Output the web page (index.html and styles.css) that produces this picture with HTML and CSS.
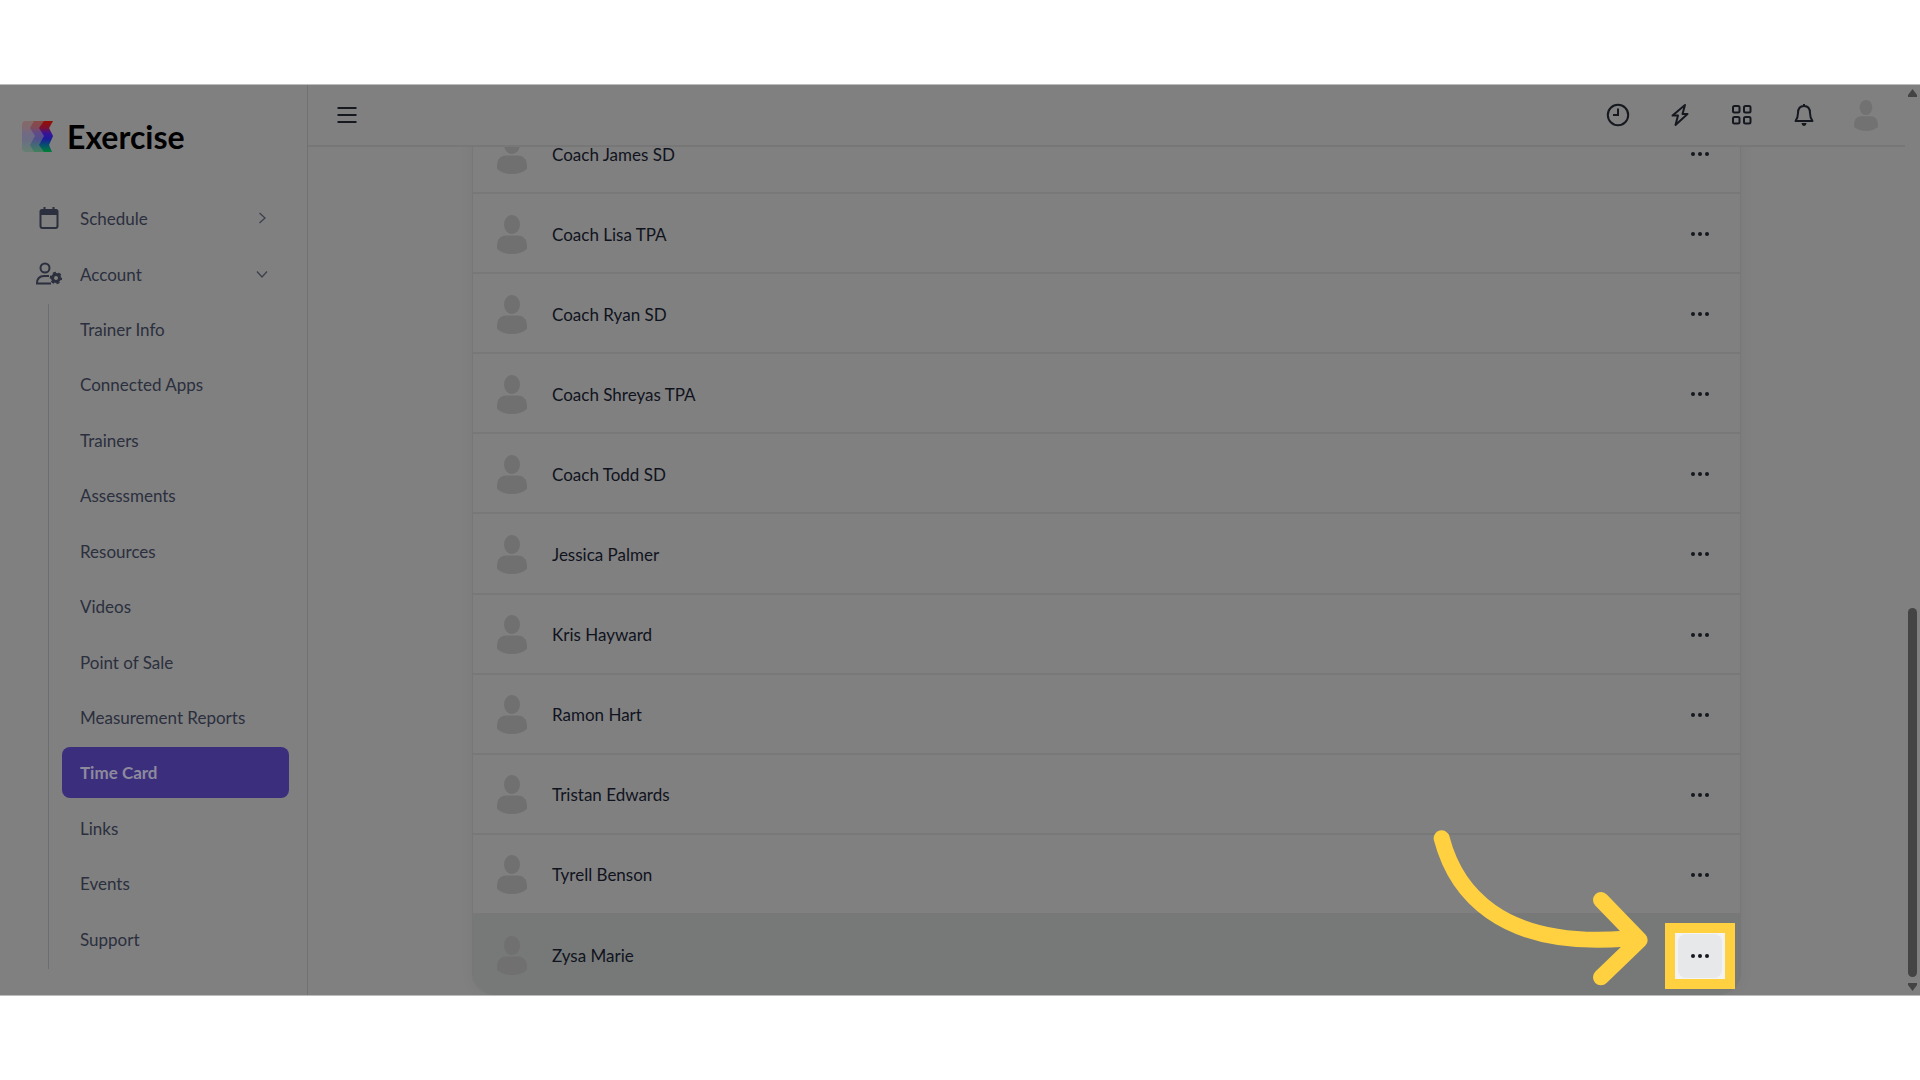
FILE: index.html
```html
<!DOCTYPE html>
<html lang="en">
<head>
    <meta charset="UTF-8">
    <meta name="viewport" content="width=device-width, initial-scale=1.0">
    <link rel="stylesheet" href="styles.css">
    <title>Time Card</title>
</head>
<body>
    <!-- shapes used more than once -->
    <svg class="defs" aria-hidden="true">
        <symbol id="person" viewBox="0 0 30 39">
            <ellipse cx="15" cy="9.500" rx="8" ry="9.500"/>
            <path d="M0 31C0 24 4 20.500 9 20.500H21C26 20.500 30 24 30 31V34C26 37.500 21 39 15 39S4 37.500 0 34Z"/>
        </symbol>
        <symbol id="dots" viewBox="0 0 18 4">
            <circle cx="2" cy="2" r="2"/><circle cx="9" cy="2" r="2"/><circle cx="16" cy="2" r="2"/>
        </symbol>
    </svg>

    <div class="app">
        <aside class="sidebar">
            <a class="brand" href="#">
                <svg width="31" height="31" viewBox="0 0 31 31" aria-hidden="true">
                    <defs>
                        <linearGradient id="rainbow" x1="0" y1="0" x2="0" y2="1">
                            <stop offset="0" stop-color="#951000"/>
                            <stop offset="0.220" stop-color="#7c1030"/>
                            <stop offset="0.400" stop-color="#38139a"/>
                            <stop offset="0.580" stop-color="#1c1b98"/>
                            <stop offset="0.780" stop-color="#06506e"/>
                            <stop offset="1" stop-color="#008035"/>
                        </linearGradient>
                    </defs>
                    <path fill="#808080" d="M4 0H31V31H4Q0 31 0 27V4Q0 0 4 0Z"/>
                    <path fill="url(#rainbow)" opacity="0.200" d="M4 0H31L27 8L31 15L27 24L30 31H4Q0 31 0 27V4Q0 0 4 0Z"/>
                    <path fill="url(#rainbow)" opacity="0.350" d="M12 0H26L22 8L27 15L22 24L27 31H12L8 24L13 15L8 7Z"/>
                    <path fill="url(#rainbow)" d="M22 0H31L27 7L31 15L27 24L30 31H22L17 24L22 15L17 7Z"/>
                </svg>
                <span>Exercise</span>
            </a>

            <nav>
                <button class="group" type="button">
                    <svg class="group-icon" width="26" height="26" viewBox="0 0 26 26" aria-hidden="true">
                        <path fill="none" stroke="currentColor" stroke-width="2" d="M4.500 6.500Q4.500 5 6 5H20Q21.500 5 21.500 6.500V21Q21.500 23 19.500 23H6.500Q4.500 23 4.500 21Z"/>
                        <path fill="currentColor" d="M4 5H22V10H4ZM7.500 2H9.500V6H7.500ZM16.500 2H18.500V6H16.500Z"/>
                    </svg>
                    <span>Schedule</span>
                    <svg class="chevron" width="12" height="12" viewBox="0 0 12 12" aria-hidden="true"><path d="M3.500 1L9 6L3.500 11"/></svg>
                </button>
                <button class="group" type="button">
                    <svg class="group-icon" width="26" height="26" viewBox="0 0 26 26" aria-hidden="true">
                        <circle cx="9" cy="7" r="4.500" fill="none" stroke="currentColor" stroke-width="2"/>
                        <path fill="none" stroke="currentColor" stroke-width="2" d="M13 15H8Q1 15 1 22.500H15"/>
                        <circle cx="20" cy="17" r="3.500" fill="none" stroke="currentColor" stroke-width="3"/>
                        <circle cx="20" cy="17" r="5.200" fill="none" stroke="currentColor" stroke-width="2" stroke-dasharray="3 2.440" stroke-dashoffset="1"/>
                    </svg>
                    <span>Account</span>
                    <svg class="chevron" width="12" height="12" viewBox="0 0 12 12" aria-hidden="true"><path d="M1 3.500L6 9L11 3.500"/></svg>
                </button>
                <ul class="submenu">
                    <li><a href="#">Trainer Info</a></li>
                    <li><a href="#">Connected Apps</a></li>
                    <li><a href="#">Trainers</a></li>
                    <li><a href="#">Assessments</a></li>
                    <li><a href="#">Resources</a></li>
                    <li><a href="#">Videos</a></li>
                    <li><a href="#">Point of Sale</a></li>
                    <li><a href="#">Measurement Reports</a></li>
                    <li><a class="active" href="#">Time Card</a></li>
                    <li><a href="#">Links</a></li>
                    <li><a href="#">Events</a></li>
                    <li><a href="#">Support</a></li>
                </ul>
            </nav>
        </aside>

        <div class="page">
            <header class="topbar">
                <button class="tool" type="button" aria-label="Menu">
                    <svg width="24" height="24" viewBox="0 0 24 24"><path d="M2.500 5H21.500M2.500 12H21.500M2.500 19H21.500"/></svg>
                </button>
                <div class="tools">
                    <button class="tool" type="button" aria-label="Time clock">
                        <svg width="24" height="24" viewBox="0 0 24 24"><circle cx="12" cy="12" r="10.200"/><path d="M12 5.500V12H7"/></svg>
                    </button>
                    <button class="tool" type="button" aria-label="Quick actions">
                        <svg width="24" height="24" viewBox="0 0 24 24"><path stroke-linejoin="round" d="M17 2L4.500 12.500H10L7.500 22L19.500 11H14.500Z"/></svg>
                    </button>
                    <button class="tool" type="button" aria-label="Apps">
                        <svg width="24" height="24" viewBox="0 0 24 24">
                            <rect x="3" y="3" width="6.500" height="6.500" rx="1.500"/><rect x="14" y="3" width="6.500" height="6.500" rx="1.500"/>
                            <rect x="3" y="14" width="6.500" height="6.500" rx="1.500"/><rect x="14" y="14" width="6.500" height="6.500" rx="1.500"/>
                        </svg>
                    </button>
                    <button class="tool" type="button" aria-label="Notifications">
                        <svg width="24" height="24" viewBox="0 0 24 24">
                            <path stroke-linejoin="round" d="M12 3C8 3 6 6 6 10C6 14 5 16 3.500 18H20.500C19 16 18 14 18 10C18 6 16 3 12 3ZM12 1V3"/>
                            <path fill="currentColor" stroke="none" d="M9.500 20H14.500Q14 23 12 23T9.500 20Z"/>
                        </svg>
                    </button>
                    <button class="tool" type="button" aria-label="Profile">
                        <svg class="avatar small" aria-hidden="true"><use href="#person"/></svg>
                    </button>
                </div>
            </header>

            <main>
                <ul class="trainers">
                    <li><svg class="avatar"><use href="#person"/></svg><span>Coach James SD</span><button class="more" type="button" aria-label="More"><svg><use href="#dots"/></svg></button></li>
                    <li><svg class="avatar"><use href="#person"/></svg><span>Coach Lisa TPA</span><button class="more" type="button" aria-label="More"><svg><use href="#dots"/></svg></button></li>
                    <li><svg class="avatar"><use href="#person"/></svg><span>Coach Ryan SD</span><button class="more" type="button" aria-label="More"><svg><use href="#dots"/></svg></button></li>
                    <li><svg class="avatar"><use href="#person"/></svg><span>Coach Shreyas TPA</span><button class="more" type="button" aria-label="More"><svg><use href="#dots"/></svg></button></li>
                    <li><svg class="avatar"><use href="#person"/></svg><span>Coach Todd SD</span><button class="more" type="button" aria-label="More"><svg><use href="#dots"/></svg></button></li>
                    <li><svg class="avatar"><use href="#person"/></svg><span>Jessica Palmer</span><button class="more" type="button" aria-label="More"><svg><use href="#dots"/></svg></button></li>
                    <li><svg class="avatar"><use href="#person"/></svg><span>Kris Hayward</span><button class="more" type="button" aria-label="More"><svg><use href="#dots"/></svg></button></li>
                    <li><svg class="avatar"><use href="#person"/></svg><span>Ramon Hart</span><button class="more" type="button" aria-label="More"><svg><use href="#dots"/></svg></button></li>
                    <li><svg class="avatar"><use href="#person"/></svg><span>Tristan Edwards</span><button class="more" type="button" aria-label="More"><svg><use href="#dots"/></svg></button></li>
                    <li><svg class="avatar"><use href="#person"/></svg><span>Tyrell Benson</span><button class="more" type="button" aria-label="More"><svg><use href="#dots"/></svg></button></li>
                    <li class="hovered">
                        <svg class="avatar"><use href="#person"/></svg><span>Zysa Marie</span>
                        <div class="spotlight"><button class="more" type="button" aria-label="More"><svg><use href="#dots"/></svg></button></div>
                        <svg class="arrow" viewBox="90 80 669 489" aria-hidden="true">
                            <path d="M125 114C165 268 295 445 675 415"/>
                            <path d="M603 299L719 419L603 531"/>
                        </svg>
                    </li>
                </ul>
            </main>
        </div>

        <div class="scrollbar" aria-hidden="true">
            <svg width="9" height="8" viewBox="0 0 9 8"><path d="M4.500 0L9 6V8H0V6Z"/></svg>
            <div class="thumb"></div>
            <svg width="9" height="8" viewBox="0 0 9 8"><path d="M0 0H9V2L4.500 8L0 2Z"/></svg>
        </div>
    </div>
</body>
</html>
```
FILE: styles.css
```css
*
{
    box-sizing: border-box;
}

body
{
    margin: 0;
    background-color: white;
    color: #10131e;
    font-family: Lato, "Liberation Sans", sans-serif;
    font-size: 17px;
}

ul
{
    list-style: none;
    margin: 0;
    padding: 0;
}

a
{
    color: inherit;
    text-decoration: none;
}

button
{
    border: none;
    background: none;
    padding: 0;
    color: inherit;
    font: inherit;
    cursor: pointer;
}

.defs
{
    position: absolute;
    width: 0;
    height: 0;
}

.app
{
    display: flex;
    height: calc(100vh - 168px);
    margin: 84px 0;
    border-top: 1px solid #bdbdbd;
    border-bottom: 1px solid #bdbdbd;
    background-color: #808080;
}

/* sidebar */
.sidebar
{
    width: 308px;
    flex-shrink: 0;
    border-right: 1px solid #707075;
    color: #2b2f3e;
}

.brand
{
    display: flex;
    align-items: center;
    gap: 14px;
    height: 105px;
    padding: 0 0 2px 22px;
    color: black;
    font-size: 32px;
    line-height: 36px;
    font-weight: bold;
}

.group
{
    display: flex;
    align-items: center;
    width: 100%;
    height: 56px;
    padding: 0 39px 0 36px;
    text-align: left;
}

.group span
{
    flex: 1;
    margin-left: 18px;
}

.chevron
{
    fill: none;
    stroke: #3c404d;
    stroke-width: 1.3;
}

.submenu
{
    display: grid;
    grid-auto-rows: 1fr;
    align-items: start;
    height: 665px;
    margin: 2px 18px 0 48px;
    padding-left: 13px;
    border-left: 1px solid #6c6c73;
}

.submenu a
{
    display: flex;
    align-items: center;
    height: 51px;
    padding-left: 18px;
    border-radius: 8px;
}

.submenu .active
{
    background-color: #3b2f7d;
    color: #8d8a9c;
    font-weight: bold;
}

/* top bar */
.page
{
    display: flex;
    flex-direction: column;
    flex: 1;
    min-width: 0;
}

.topbar
{
    display: flex;
    justify-content: space-between;
    align-items: center;
    flex-shrink: 0;
    height: 62px;
    padding: 0 27px;
    border-bottom: 2px solid #777777;
    color: #15191f;
}

.tools
{
    display: flex;
    gap: 38px;
}

.tool
{
    display: flex;
    justify-content: center;
    align-items: center;
    width: 24px;
    height: 32px;
}

.tool svg
{
    fill: none;
    stroke: currentColor;
    stroke-width: 2;
}

.avatar
{
    width: 30px;
    height: 39px;
    flex-shrink: 0;
    fill: #707070;
}

.tool .small
{
    width: 24px;
    height: 31px;
    fill: #727272;
    stroke: none;
}

/* trainer list, scrolled to its end */
main
{
    display: flex;
    flex-direction: column;
    justify-content: flex-end;
    flex: 1;
    min-height: 0;
    overflow: hidden;
}

.trainers
{
    display: grid;
    grid-auto-rows: 1fr;
    flex-shrink: 0;
    height: 882px;
    margin: 0 164px;
    border: 1px solid #777777;
    border-bottom: none;
    border-radius: 0 0 22px 22px;
    box-shadow: 0 0 14px rgba(0, 0, 0, 0.05);
}

.trainers li
{
    display: flex;
    align-items: center;
    position: relative;
    padding: 2px 18px 0 24px;
    border-bottom: 2px solid #787878;
}

.trainers li > span
{
    flex: 1;
    margin-left: 25px;
}

.trainers .hovered
{
    background-color: #767978;
    border-bottom: none;
    border-radius: 0 0 22px 22px;
}

.more
{
    display: flex;
    justify-content: center;
    align-items: center;
    width: 44px;
    height: 44px;
    border-radius: 8px;
}

.more svg
{
    width: 18px;
    height: 4px;
    fill: #15191f;
}

.spotlight
{
    display: flex;
    justify-content: center;
    align-items: center;
    width: 70px;
    height: 66px;
    margin-right: -13px;
    border: 10px solid #ffd140;
    background-color: #f3f3f4;
}

.spotlight .more
{
    background-color: #e7e8ea;
}

.arrow
{
    position: absolute;
    right: 87px;
    bottom: 5px;
    width: 223px;
    height: 163px;
    fill: none;
    stroke: #ffd140;
    stroke-width: 48;
    stroke-linecap: round;
    stroke-linejoin: round;
}

/* scrollbar */
.scrollbar
{
    display: flex;
    flex-direction: column;
    align-items: center;
    width: 15px;
    padding: 4px 0;
    fill: #444444;
}

.thumb
{
    width: 9px;
    height: 369px;
    margin: auto 0 6px;
    border-radius: 5px;
    background-color: #444444;
}
```
